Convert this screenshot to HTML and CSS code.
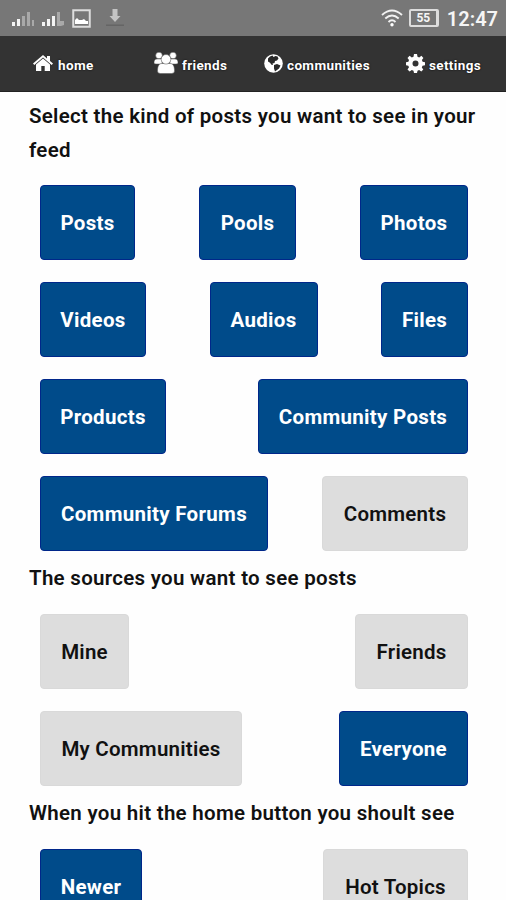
FILE: index.html
```html
<!DOCTYPE html>
<html lang="en">
<head>
<meta charset="utf-8">
<title>Feed settings</title>
<link rel="stylesheet" href="styles.css">
</head>
<body>
<header class="status">
  <div class="status-left">
    <svg class="signal" width="22" height="16" viewBox="0 0 22 16"><path fill="#f4f4f4" d="M0 11h3v4H0zM5 8h3v7H5z"/><path fill="#a9a9a9" d="M10 5h3v10h-3zM15 1h3v14h-3zM20 9h2v6h-2z"/></svg>
    <svg class="signal" width="22" height="16" viewBox="0 0 22 16"><path fill="#f4f4f4" d="M0 11h3v4H0zM5 8h3v7H5zM10 5h3v10h-3z"/><path fill="#a9a9a9" d="M15 1h3v9h4v4l-3 1h-4z"/></svg>
    <svg class="image" width="19" height="19" viewBox="0 0 19 19"><rect x="1.250" y="1.250" width="16.500" height="16.500" fill="none" stroke="#ddd" stroke-width="2"/><path fill="#fff" d="M3 15v-4l2-2 2 2 3 0 2-1 2 2 2 0v3z"/></svg>
    <svg class="download" width="18" height="18" viewBox="0 0 18 18"><path fill="#c4c4c4" d="M6.500 0h5v7h3L9 13 3.500 7h3z"/><path fill="#656565" d="M0 15.500h18v1.500H0z"/></svg>
  </div>
  <div class="status-right">
    <svg class="wifi" width="22" height="18" viewBox="0 0 22 18"><g fill="none" stroke="#f1f1f1" stroke-width="1.900"><path d="M1 6Q11-3 21 6M4.300 9.500Q11 3.500 17.700 9.500M7.500 13Q11 9.500 14.500 13"/></g><circle cx="11" cy="15.700" r="1.700" fill="#fff"/></svg>
    <span class="battery">55</span>
    <span class="clock">12:47</span>
  </div>
</header>
<nav class="nav">
  <a class="tab home"><svg width="20" height="18" viewBox="0 0 20 18"><path fill="#fff" d="M10 1 0 9.500l1.300 1.400L10 3.600l8.700 7.300L20 9.500l-3-2.600V2h-3v2.400z"/><path fill="#fff" d="m10 4.500-7 6V17h5.300v-5h3.400v5H17v-6.500z"/></svg><span>home</span></a>
  <a class="tab friends"><svg width="24" height="22" viewBox="0 0 24 22"><g fill="#fff" stroke="#555" stroke-width=".5"><circle cx="5" cy="3.500" r="3.300"/><circle cx="19" cy="3.500" r="3.300"/><path d="M0 11c0-3 1-4 3-4h5v5H2q-2 0-2-1zM24 11c0-3-1-4-3-4h-5v5h6q2 0 2-1z"/><path d="M3.500 19c0-5 1.500-7.500 4.500-7.500h8c3 0 4.500 2.500 4.500 7.500q0 2.500-3 2.500h-11q-3 0-3-2.500z"/><circle cx="12" cy="7.300" r="4.800"/></g></svg><span>friends</span></a>
  <a class="tab communities"><svg width="19" height="19" viewBox="0 0 19 19"><circle cx="9.500" cy="9.500" r="9.300" fill="#fff"/><path fill="#292929" d="M6 2.500 8.500 1.500l1 1.500 2-1 2 .5 1 2-1.500 2-2 .5-.5 2-2 .5.500 1.500-1.500-.3-1.500-2-2-1.200L4 4.500zM10 11l3-1 3.500 1.500-1.500 3-2 1.500-2 1.500-1-3z"/></svg><span>communities</span></a>
  <a class="tab settings"><svg width="19" height="19" viewBox="0 0 19 19"><path fill="#fff" fill-rule="evenodd" d="M8 0h3l.5 2.700 1.700.7 2.200-1.600 2 2.100-1.500 2.200.7 1.700 2.400.4v3l-2.500.5-.7 1.700 1.500 2.100-2 2.100-2.200-1.500-1.600.7L11 19H8l-.5-2.300-1.700-.7-2.200 1.500-2.100-2.100L3 13.300l-.7-1.600L0 11.200v-3l2.400-.4.6-1.700-1.500-2.200 2.100-2.100 2.200 1.600 1.700-.7zM9.500 6.500a3 3 0 1 0 0 6 3 3 0 0 0 0-6z"/></svg><span>settings</span></a>
</nav>
<main class="content">
  <h2 class="heading first">Select the kind of posts you want to see in your feed</h2>
  <div class="choices">
    <div class="row"><button class="choice on w95">Posts</button><button class="choice on w97">Pools</button><button class="choice on w108">Photos</button></div>
    <div class="row"><button class="choice on w106">Videos</button><button class="choice on w108">Audios</button><button class="choice on w87">Files</button></div>
    <div class="row"><button class="choice on w126">Products</button><button class="choice on w210">Community Posts</button></div>
    <div class="row"><button class="choice on w228">Community Forums</button><button class="choice w146">Comments</button></div>
  </div>
  <h2 class="heading sources">The sources you want to see posts</h2>
  <div class="choices">
    <div class="row"><button class="choice w89">Mine</button><button class="choice w113">Friends</button></div>
    <div class="row"><button class="choice w202">My Communities</button><button class="choice on w129">Everyone</button></div>
  </div>
  <h2 class="heading order">When you hit the home button you shoult see</h2>
  <div class="choices">
    <div class="row"><button class="choice on w102">Newer</button><button class="choice w145">Hot Topics</button></div>
  </div>
</main>
</body>
</html>
```
FILE: styles.css
```css
* { box-sizing: border-box; }
html, body { height: 900px; overflow: hidden; }
body { margin: 0; background: #fefefe; font-family: Roboto, sans-serif; color: #111; }
svg { display: block; flex: none; }
.status { display: flex; justify-content: space-between; height: 36px; background: #777; color: #f5f5f5; }
.status-left, .status-right { display: flex; align-items: flex-start; }
.status-left { padding-left: 12px; }
.signal { margin: 11px 8px 0 0; }
.image { margin-top: 9px; }
.download { margin: 9px 0 0 15px; }
.status-right { padding-right: 8px; }
.wifi { margin: 9px 6px 0 0; }
.battery { width: 30px; height: 18px; margin: 9px 8px 0 0; border: 2px solid #ddd; border-right-width: 3px; border-radius: 2px; font-size: 12px; line-height: 15px; font-weight: 700; text-align: center; }
.clock { font-size: 20px; line-height: 38px; font-weight: 600; white-space: nowrap; }
.nav { display: flex; height: 56px; padding-left: 33px; background: #333; border-bottom: 1px solid #222; color: #fff; }
.tab { display: flex; font-size: 13.5px; line-height: 59px; font-weight: 700; letter-spacing: .36px; white-space: nowrap; text-shadow: 0 0 2px #000; }
.home { width: 121px; gap: 5px; }
.friends { width: 110px; gap: 4px; }
.communities { width: 142px; gap: 4px; }
.settings { gap: 4px; }
.home svg { margin-top: 18px; }
.friends svg { margin-top: 16px; }
.communities svg, .settings svg { margin-top: 18px; }
.content { padding: 7px 29px 0; }
.heading { margin: 0; font-size: 20.5px; line-height: 34px; font-weight: 600; letter-spacing: .29px; }
.first { height: 86px; }
.sources, .order { height: 53px; margin-top: 10px; }
.choices { padding: 0 9px 0 11px; display: flex; flex-direction: column; gap: 22px; }
.row { display: flex; justify-content: space-between; height: 75px; }
.choice { height: 75px; padding: 0; border: 1px solid #d9d9d9; border-radius: 4px; background: #ddd; color: #111; font: 600 20.5px Roboto, sans-serif; letter-spacing: .24px; white-space: nowrap; }
.on { border-color: #00278a; background: #004b8a; color: #fff; font-weight: 700; letter-spacing: .3px; }
.w87 { width: 87px; }
.w89 { width: 89px; }
.w95 { width: 95px; }
.w97 { width: 97px; }
.w102 { width: 102px; }
.w106 { width: 106px; }
.w108 { width: 108px; }
.w113 { width: 113px; }
.w126 { width: 126px; }
.w129 { width: 129px; }
.w145 { width: 145px; }
.w146 { width: 146px; }
.w202 { width: 202px; }
.w210 { width: 210px; }
.w228 { width: 228px; }
```
